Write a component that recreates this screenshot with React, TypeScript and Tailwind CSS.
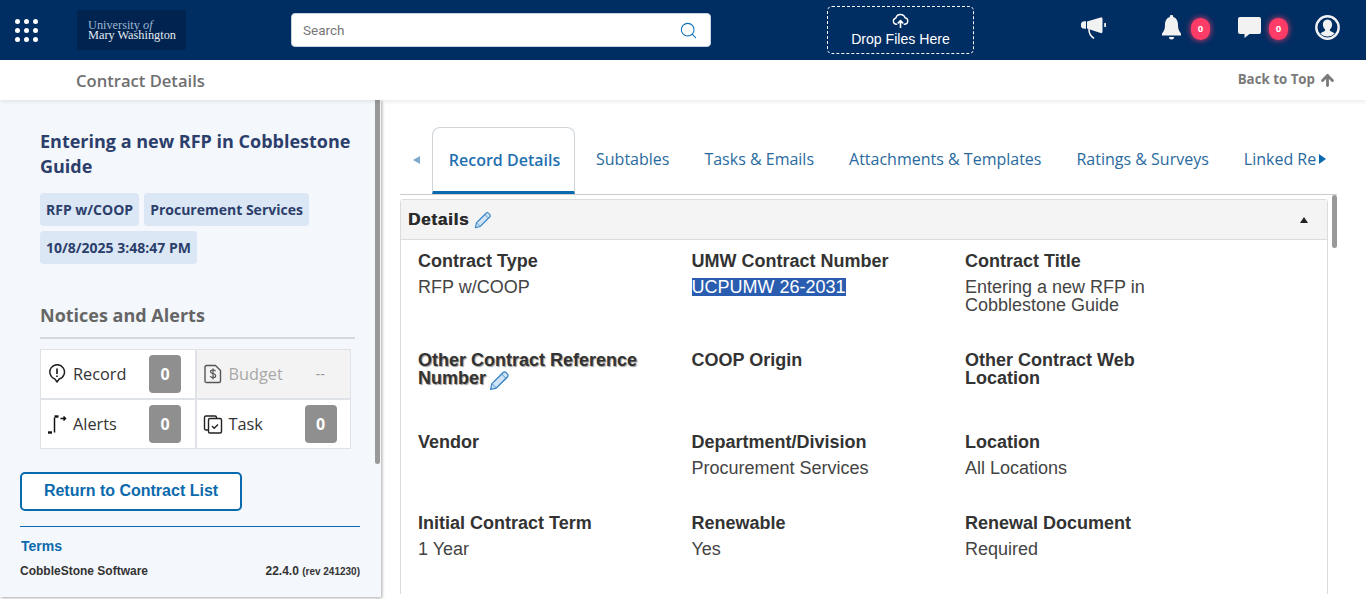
import { ArrowUp, Search } from 'lucide-react';

const openSans = "font-['Open_Sans',sans-serif]";

function Pencil({ size = 18, className = '' }: { size?: number; className?: string }) {
  return (
    <svg width={size} height={size} viewBox="0 0 20 20" className={`inline-block align-[-3px] ${className}`}>
      <path d="M1.5 18.5l1.3-5.5L13.4 2.4a1.9 1.9 0 0 1 2.7 0l1.5 1.5a1.9 1.9 0 0 1 0 2.7L7 17.2z" fill="#cfe3f5" stroke="#3a86c6" strokeWidth="1.2" strokeLinejoin="round" />
      <path d="M2.8 13L7 17.2M12 3.8L16.2 8M4.8 11.4L13.6 2.8M8.6 15.4L17.2 6.4" fill="none" stroke="#3a86c6" strokeWidth="0.8" />
    </svg>
  );
}

function Field({ label, value, children }: { label?: string; value?: string; children?: React.ReactNode }) {
  return (
    <div className="pr-8">
      <div className="text-[18px] leading-[18px] font-bold text-[#333333]">{children ?? label}</div>
      {value && <div className="mt-[8px] text-[18px] leading-[18px] text-[#444444]">{value}</div>}
    </div>
  );
}

function AlertCell({ icon, label, count, disabled }: { icon: React.ReactNode; label: string; count: string; disabled?: boolean }) {
  return (
    <div className={`flex h-[50px] items-center border border-[#dfe2e6] pl-[5px] ${disabled ? 'bg-[#f3f3f3]' : 'bg-white'}`}>
      <span className="flex w-[22px] justify-center">{icon}</span>
      <span className={`ml-[5px] w-[76px] text-[16.3px] ${openSans} ${disabled ? 'text-[#a8a8a8]' : 'text-[#333333]'}`}>{label}</span>
      {disabled ? (
        <span className="ml-[11px] text-[14px] text-[#999999]">--</span>
      ) : (
        <span className={`flex h-[38px] w-[32px] items-center justify-center rounded-[4px] bg-[#8f8f8f] text-[16px] font-bold text-white ${openSans}`}>{count}</span>
      )}
    </div>
  );
}

function CountBadge({ className }: { className: string }) {
  return (
    <span className={`flex h-[22px] w-[19px] items-center justify-center rounded-full bg-[#ff3b68] text-[9.5px] font-bold text-white shadow-[0_0_6px_#ff3b68] ${openSans} ${className}`}>0</span>
  );
}

export default function App() {
  return (
    <div className="flex h-[599px] w-[1366px] flex-col overflow-hidden bg-white font-['Liberation_Sans',sans-serif]">
      {/* Top bar */}
      <header className="flex h-[60px] shrink-0 items-center bg-[#002d62]">
        <div className="ml-[15px] grid grid-cols-3 gap-x-[4px] gap-y-[4px]">
          {Array.from({ length: 9 }).map((_, i) => (
            <span key={i} className="h-[5px] w-[5px] rounded-full bg-white" />
          ))}
        </div>
        <div className="ml-[39px] flex h-[40px] w-[109px] flex-col justify-center bg-[#00234f] pl-[11px] font-['Liberation_Serif',serif] text-[12.3px] leading-[10px]">
          <span className="text-[#9fb6cf]">University <i>of</i></span>
          <span className="text-[#e6ebf1]">Mary Washington</span>
        </div>
        <div className="ml-[105px] flex h-[34px] w-[420px] items-center justify-between rounded-[4px] border border-[#c9d3de] bg-white pl-[11px] pr-[12px]">
          <span className="font-['Roboto',sans-serif] text-[13.5px] text-[#777777]">Search</span>
          <Search size={19} strokeWidth={1.3} className="text-[#0b6fb8]" />
        </div>
        <div className="ml-[116px] flex h-[48px] w-[147px] flex-col items-center justify-center rounded-[5px] border border-dashed border-white text-white">
          <svg width="17" height="15" viewBox="0 0 24 22" fill="none" stroke="white" strokeWidth="2" strokeLinecap="round" strokeLinejoin="round">
            <path d="M6.5 16.5H6a4.6 4.6 0 0 1-.8-9.1A7 7 0 0 1 18.6 7a4.8 4.8 0 0 1-.1 9.5H17.5" />
            <path d="M12 21V11.5M8.8 14.5l3.2-3.4 3.2 3.4" strokeWidth="2.4" />
          </svg>
          <span className="mt-[2px] text-[14.1px] leading-[18px]">Drop Files Here</span>
        </div>
        {/* Megaphone */}
        <svg width="25" height="22" viewBox="0 0 25 22" className="mb-[5px] ml-[107px]">
          <path d="M5 4.3H3.5a3.7 3.7 0 0 0 0 7.4H5z" fill="#f2f2f2" />
          <path d="M6 4.4L19.5.4Q21.5 0 21.5 2v12.5q0 2-2 1.6L6 11.6z" fill="#f2f2f2" />
          <rect x="23.2" y="5.8" width="1.8" height="4.4" rx="0.9" fill="#f2f2f2" />
          <path d="M8 12.5c0 3.5 1.5 6.5 4.5 8.5" fill="none" stroke="#f2f2f2" strokeWidth="1.6" strokeLinecap="round" />
        </svg>
        {/* Bell */}
        <svg width="19" height="25" viewBox="0 0 19 25" className="mb-[5px] ml-[56px]">
          <path d="M9.5 0a1.6 1.6 0 0 1 1.6 2C14.6 3 16 6 16 10c0 4 1 6 3 8.5V20.5H0v-2C2 16 3 14 3 10c0-4 1.4-7 4.9-8A1.6 1.6 0 0 1 9.5 0z" fill="#f2f2f2" />
          <path d="M7 22h5a2.5 2.5 0 0 1-5 0z" fill="#f2f2f2" />
        </svg>
        <CountBadge className="ml-[10px] mb-[2px]" />
        {/* Chat bubble */}
        <svg width="23" height="21" viewBox="0 0 23 21" className="mb-[5px] ml-[28px]">
          <path d="M2 0h19a2 2 0 0 1 2 2v13a2 2 0 0 1-2 2H11.5L6.5 21v-4H2a2 2 0 0 1-2-2V2a2 2 0 0 1 2-2z" fill="#f2f2f2" />
        </svg>
        <CountBadge className="ml-[8px] mb-[2px]" />
        {/* Profile */}
        <svg width="25" height="25" viewBox="0 0 25 25" className="mb-[5px] ml-[27px]">
          <circle cx="12.5" cy="12.5" r="11.2" fill="#002d62" stroke="#f2f2f2" strokeWidth="2.4" />
          <path d="M12.5 4.5c-3 0-4.6 2.2-4.6 5 0 2.2 1 4 2.2 5 .2.8 0 1.3-.7 1.7-1.5.7-3.2 1.3-4 2.6a10.5 10.5 0 0 0 14.2 0c-.8-1.3-2.5-1.9-4-2.6-.7-.4-.9-.9-.7-1.7 1.2-1 2.2-2.8 2.2-5 0-2.8-1.6-5-4.4-5z" fill="#f2f2f2" />
        </svg>
      </header>

      {/* Page title bar */}
      <div className={`relative z-10 flex h-[40px] shrink-0 items-center justify-between bg-white pl-[76px] pr-[30px] shadow-[0_2px_4px_rgba(0,0,0,0.08)] ${openSans}`}>
        <span className="mt-[2px] text-[16.6px] font-semibold text-[#6f6f6f]">Contract Details</span>
        <span className="flex items-center gap-[4px] text-[13.3px] font-bold text-[#7a7a7a]">
          Back to Top <ArrowUp size={17} strokeWidth={4} />
        </span>
      </div>

      <div className="flex min-h-0 flex-1">
        {/* Sidebar */}
        <aside className="relative h-[497px] w-[381px] shrink-0 bg-[#f4f7fb] shadow-[1px_1px_3px_rgba(0,0,0,0.35)]">
          <div className="absolute right-[1px] top-0 h-[364px] w-[5px] rounded-b-[3px] bg-[#999999]" />
          <div className="pl-[40px] pr-[26px] pt-[29px]">
            <h1 className={`text-[18px] font-bold leading-[25px] text-[#2c3e6b] ${openSans}`}>Entering a new RFP in Cobblestone Guide</h1>
            <div className={`mt-[14px] flex flex-wrap gap-x-[5px] gap-y-[5px] text-[14px] font-bold text-[#2c3e6b] ${openSans}`}>
              <span className="flex h-[33px] items-center rounded-[4px] bg-[#dbe7f4] px-[6px]">RFP w/COOP</span>
              <span className="flex h-[33px] items-center rounded-[4px] bg-[#dbe7f4] px-[6px]">Procurement Services</span>
              <span className="flex h-[33px] items-center rounded-[4px] bg-[#dbe7f4] px-[6px]">10/8/2025 3:48:47 PM</span>
            </div>
            <h2 className={`mt-[38px] text-[18px] font-bold leading-[26px] text-[#666666] ${openSans}`}>Notices and Alerts</h2>
            <div className="mt-[9px] h-[2px] w-[315px] bg-[#d3d8de]" />
          </div>
          <div className="ml-[40px] mt-[10px] grid w-[311px] grid-cols-2">
            <AlertCell
              label="Record"
              count="0"
              icon={
                <svg width="18" height="20" viewBox="0 0 18 20" fill="none" stroke="#222" strokeWidth="1.5">
                  <path d="M9 18l-2.2-3.1A7.3 7.3 0 1 1 11.2 15z" strokeLinejoin="round" />
                  <path d="M9 4.5v5.5M9 11.5v1.6" strokeWidth="1.7" />
                </svg>
              }
            />
            <AlertCell
              disabled
              label="Budget"
              count="--"
              icon={
                <svg width="18" height="20" viewBox="0 0 18 20" fill="none" stroke="#555" strokeWidth="1.4" strokeLinejoin="round">
                  <path d="M2.5 1.5h9l5 5v10.5a1.5 1.5 0 0 1-1.5 1.5h-12A1.5 1.5 0 0 1 1 17V3a1.5 1.5 0 0 1 1.5-1.5z" />
                  <path d="M11.5 7.2c-.4-1-1.4-1.4-2.5-1.4-1.4 0-2.5.7-2.5 1.9 0 2.7 5.2 1.3 5.2 4 0 1.2-1.2 1.9-2.7 1.9-1.2 0-2.3-.5-2.7-1.5M9 4.5v11" strokeWidth="1.2" />
                </svg>
              }
            />
            <AlertCell
              label="Alerts"
              count="0"
              icon={
                <svg width="20" height="20" viewBox="0 0 20 20" fill="none" stroke="#111" strokeWidth="1.5">
                  <path d="M1 18.5h4" strokeWidth="2.4" />
                  <path d="M7.5 18.5V3.5" />
                  <path d="M7.5 2.5h4" strokeWidth="2.4" />
                  <path d="M13.5 4.5h5M16.5 2.5l2 2-2 2" />
                </svg>
              }
            />
            <AlertCell
              label="Task"
              count="0"
              icon={
                <svg width="20" height="20" viewBox="0 0 20 20" fill="none" stroke="#222" strokeWidth="1.4">
                  <path d="M5 16H3a1.5 1.5 0 0 1-1.5-1.5v-11A1.5 1.5 0 0 1 3 2h9a1.5 1.5 0 0 1 1.5 1.5V4" />
                  <rect x="5.5" y="4.5" width="13" height="14.5" rx="1.5" />
                  <path d="M9 12l2.2 2.2L15 10.5" />
                </svg>
              }
            />
          </div>
          <div className="ml-[20px] mt-[23px] flex h-[39px] w-[222px] items-center justify-center rounded-[5px] border-2 border-[#0b6aad] bg-white pb-[2px] text-[16px] font-bold text-[#0b6aad]">
            Return to Contract List
          </div>
          <div className="ml-[20px] mt-[15px] w-[340px] border-t border-[#0b6aad] pt-[10px]">
            <div className="pl-[1px] text-[14px] font-bold leading-[18px] text-[#0b6aad]">Terms</div>
            <div className="mt-[7px] flex items-center justify-between text-[#333333]">
              <span className="text-[12px] font-bold">CobbleStone Software</span>
              <span className="text-[12px] font-bold">22.4.0 <span className="text-[10px]">(rev 241230)</span></span>
            </div>
          </div>
        </aside>

        {/* Main */}
        <main className="relative min-w-0 flex-1 pl-[19px] pr-[29px]">
          <div className={`flex h-[95px] items-end overflow-hidden border-b border-[#cccccc] text-[16px] text-[#2a6a9e] ${openSans}`}>
            <span className="mb-[30px] ml-[13px] mr-[12px] h-0 w-0 border-y-[4px] border-r-[7px] border-y-transparent border-r-[#7fa8c9]" />
            <span className="flex h-[67px] w-[143px] shrink-0 items-center justify-center rounded-t-[8px] border border-b-[3px] border-[#cfd4d9] border-b-[#0b6aad] pl-[2px] font-semibold text-[#1f70b0]">
              Record Details
            </span>
            <div className="flex h-[67px] items-center pb-[3px]">
              <span className="ml-[21px] shrink-0">Subtables</span>
              <span className="ml-[35px] shrink-0">Tasks &amp; Emails</span>
              <span className="ml-[35px] shrink-0">Attachments &amp; Templates</span>
              <span className="ml-[35px] shrink-0">Ratings &amp; Surveys</span>
              <span className="ml-[35px] w-[74px] shrink-0 overflow-hidden whitespace-nowrap">Linked Re</span>
              <span className="ml-[1px] h-0 w-0 shrink-0 border-y-[5px] border-l-[7px] border-y-transparent border-l-[#0b6aad]" />
            </div>
          </div>

          <div className="absolute right-[29px] top-[95px] h-[53px] w-[5px] rounded-[3px] bg-[#999999]" />

          <div className="mr-[9px] mt-[4px] h-[395px] rounded-t-[4px] border border-b-0 border-[#dcdcdc]">
            <div className="flex h-[40px] items-center justify-between border-b border-[#dcdcdc] bg-[#f4f4f4] pl-[7px] pr-[19px]">
              <span className="flex items-center gap-[5px]">
                <span className="text-[17px] font-bold tracking-[0.8px] text-[#2b2b2b] [text-shadow:0.4px_0_0_#2b2b2b]">Details</span>
                <Pencil size={18} />
              </span>
              <span className="h-0 w-0 border-x-[4px] border-b-[6px] border-x-transparent border-b-[#222222]" />
            </div>
            <div className="grid grid-cols-[273.5px_273.5px_273.5px] pl-[17px] pt-[12px]">
              <div className="h-[99px]"><Field label="Contract Type" value="RFP w/COOP" /></div>
              <div>
                <Field label="UMW Contract Number" />
                <span className="mt-[8px] inline-block bg-[#2a5db0] text-[18px] leading-[18px] text-white">UCPUMW 26-2031</span>
              </div>
              <Field label="Contract Title" value="Entering a new RFP in Cobblestone Guide" />

              <div className="h-[82px]">
                <Field>
                  <span className="[text-shadow:1px_1px_1px_#999999]">Other Contract Reference Number</span>
                  <Pencil size={21} className="-my-[4px] ml-[3px]" />
                </Field>
              </div>
              <Field label="COOP Origin" />
              <Field label="Other Contract Web Location" />

              <div className="h-[81px]"><Field label="Vendor" /></div>
              <Field label="Department/Division" value="Procurement Services" />
              <Field label="Location" value="All Locations" />

              <Field label="Initial Contract Term" value="1 Year" />
              <Field label="Renewable" value="Yes" />
              <Field label="Renewal Document" value="Required" />
            </div>
          </div>
        </main>
      </div>
    </div>
  );
}
